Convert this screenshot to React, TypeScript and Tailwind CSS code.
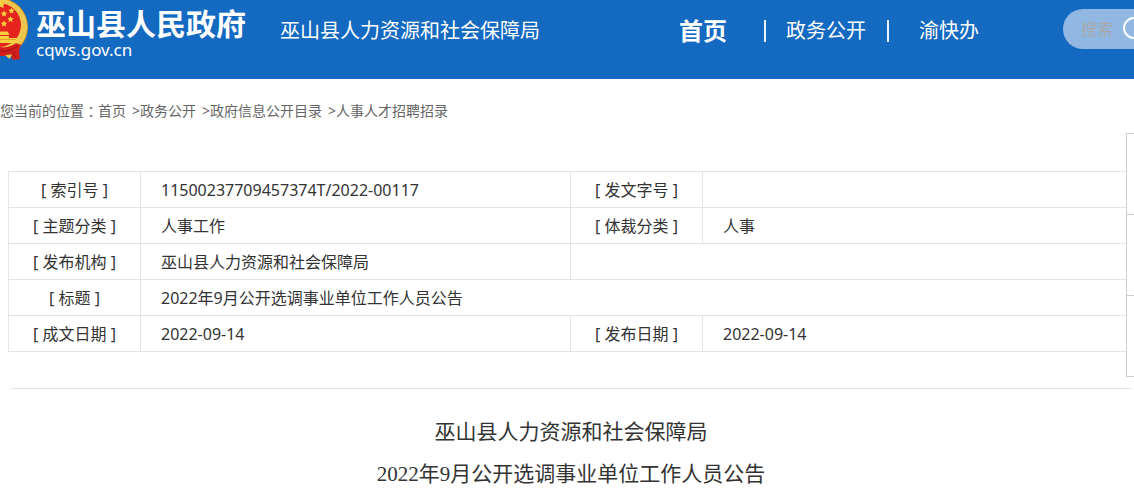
import { clsx } from 'clsx'

const navItems = [
  { label: '政务公开', href: '#zwgk' },
  { label: '渝快办', href: '#ykb' },
]

const crumbs = ['首页', '政务公开', '政府信息公开目录', '人事人才招聘招录']

const Emblem = () => (
  <svg viewBox="0 0 28 62" className="w-7 h-[62px] shrink-0" aria-hidden="true">
    <circle cx="-1" cy="27" r="29" fill="#d99a2b" />
    <circle cx="-1" cy="27" r="28" fill="#f2c94f" />
    <circle cx="-1" cy="27" r="25" fill="none" stroke="#e3b040" strokeWidth="1" strokeDasharray="2 3" />
    <circle cx="-1" cy="25" r="22" fill="#e5241d" />
    <g fill="#f6d03f">
      <path d="M1 0l1.400 2.700 3 .4-2.200 2.100.6 3L1 6.800-1.800 8.200V0z" />
      <path d="M4 10.500l1 2 2.200.3-1.600 1.500.4 2.200-2-1-2 1 .4-2.200L.8 12.800l2.200-.3z" />
      <path d="M11.500 7.500l1 2 2.200.3-1.600 1.500.4 2.200-2-1-2 1 .4-2.200-1.600-1.500 2.200-.3z" />
      <path d="M10.500 16l1 2 2.200.3-1.600 1.500.4 2.200-2-1-2 1 .4-2.200-1.600-1.500 2.200-.3z" />
      <path d="M4 20.500l1 2 2.200.3-1.600 1.500.4 2.200-2-1-2 1 .4-2.200-1.600-1.500 2.200-.3z" />
      <path d="M0 31.500h7.500L9.500 35H0z" />
      <path d="M0 36h9v2h8v5H0z" />
    </g>
    <path d="M0 39.500h16" stroke="#d98a25" strokeWidth="0.700" />
    <path d="M0 47c7 1 12-1 16-4 2 1 4 2 5 1l-2 7 1 8-7 1-3-6-4 2-6 0z" fill="#d31e1c" />
    <path d="M5 55l7-.5L9.500 59z" fill="#f3c64a" />
    <path d="M0 51c6 1 12-1 18-5M13 51l3 7" fill="none" stroke="#9f1416" strokeWidth="1" />
  </svg>
)

const Header = () => (
  <header className="bg-[#1469c1] text-white overflow-hidden">
    <div className="flex items-start h-[79px] whitespace-nowrap">
      <a href="#home" className="flex shrink-0">
        <Emblem />
        <span className="flex flex-col pl-2 pt-2">
          <strong className="text-[30px] leading-8 font-bold">巫山县人民政府</strong>
          <span className="text-[17px] leading-5">cqws.gov.cn</span>
        </span>
      </a>
      <h1 className="ml-[34px] text-xl leading-[62px] shrink-0">巫山县人力资源和社会保障局</h1>
      <nav className="ml-[139px] flex items-center h-[62px] shrink-0">
        <a href="#home" className="text-2xl font-bold mr-[37px]">首页</a>
        {navItems.map((item, i) => (
          <span key={item.label} className="flex items-center">
            <span className="w-0.5 h-[22px] bg-white/90" />
            <a href={item.href} className={clsx('text-xl', i === 0 ? 'ml-5 mr-[21px]' : 'ml-[30px]')}>
              {item.label}
            </a>
          </span>
        ))}
      </nav>
      <form className="ml-[84px] mt-[9px] flex items-center h-10 w-[280px] shrink-0 rounded-full bg-[#90b8e3] pl-[18px]">
        <input
          type="text"
          aria-label="搜索"
          placeholder="搜索"
          className="w-[41px] h-6 text-base bg-transparent outline-none placeholder:text-[#a9a9a9]"
        />
        <button type="button" aria-label="提交搜索" className="shrink-0">
          <svg viewBox="0 0 26 26" className="w-[26px] h-[26px]" fill="none" stroke="white" strokeWidth="2">
            <circle cx="12" cy="12" r="10" />
            <path d="M19 19l6 6" />
          </svg>
        </button>
      </form>
    </div>
  </header>
)

const Breadcrumb = () => (
  <nav aria-label="当前位置" className="flex pt-5 text-sm leading-6 text-[#666]">
    您当前的位置
    <span className="font-['Noto_Sans_CJK_TC',sans-serif]">：</span>
    {crumbs.map((crumb, i) => (
      <span key={crumb} className="flex">
        {i > 0 && <span className="ml-1.5">&gt;</span>}
        <a href="#list">{crumb}</a>
      </span>
    ))}
  </nav>
)

const Label = ({ children }: { children: string }) => (
  <th scope="row" className="border border-[#e4e4e4] font-normal text-center">
    [ {children} ]
  </th>
)

const Value = ({ children, span }: { children?: string; span?: number }) => (
  <td colSpan={span} className="border border-[#e4e4e4] pl-5">
    {children}
  </td>
)

const InfoTable = () => (
  <div className="mt-12 pl-2">
    <table className="w-full table-fixed border-collapse text-base leading-5">
      <colgroup>
        <col className="w-[132px]" />
        <col className="w-[430px]" />
        <col className="w-[132px]" />
        <col />
      </colgroup>
      <tbody>
        <tr className="h-9">
          <Label>索引号</Label>
          <Value>11500237709457374T/2022-00117</Value>
          <Label>发文字号</Label>
          <Value />
        </tr>
        <tr className="h-9">
          <Label>主题分类</Label>
          <Value>人事工作</Value>
          <Label>体裁分类</Label>
          <Value>人事</Value>
        </tr>
        <tr className="h-9">
          <Label>发布机构</Label>
          <Value>巫山县人力资源和社会保障局</Value>
          <Value span={2} />
        </tr>
        <tr className="h-9">
          <Label>标题</Label>
          <Value span={3}>2022年9月公开选调事业单位工作人员公告</Value>
        </tr>
        <tr className="h-9">
          <Label>成文日期</Label>
          <Value>2022-09-14</Value>
          <Label>发布日期</Label>
          <Value>2022-09-14</Value>
        </tr>
      </tbody>
    </table>
  </div>
)

// share / print / top shortcuts, docked past the right edge
const SideDock = () => (
  <aside className="absolute top-[133px] -right-[73px] w-[81px] bg-white border border-b-0 border-[#ccc]">
    {[1, 2, 3].map((n) => (
      <div key={n} className="h-[81px] border-b border-[#ccc]" />
    ))}
  </aside>
)

export default function App() {
  return (
    <div className="relative overflow-hidden bg-white text-[#333] font-['Noto_Sans','Noto_Sans_CJK_SC',sans-serif]">
      <Header />
      <Breadcrumb />
      <main>
        <InfoTable />
        <hr className="mt-9 ml-[11px] mr-[3px] border-[#e4e4e4]" />
        <article className="mt-[22px] ml-[11px] mr-[3px] text-center text-[21px] leading-[42px] font-['Liberation_Serif','Noto_Sans_CJK_SC',serif]">
          <p>巫山县人力资源和社会保障局</p>
          <p>2022年9月公开选调事业单位工作人员公告</p>
        </article>
      </main>
      <SideDock />
    </div>
  )
}
